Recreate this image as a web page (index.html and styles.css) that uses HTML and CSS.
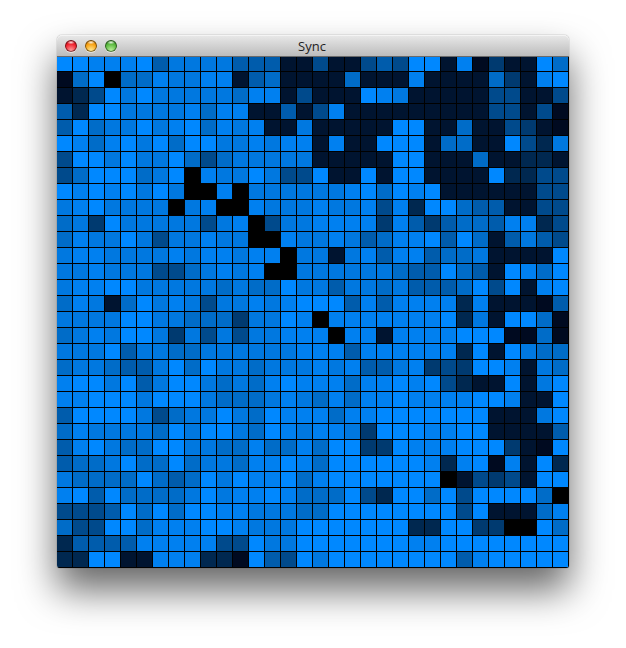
FILE: index.html
```html
<!DOCTYPE html>
<html lang="en">
<head>
    <meta charset="UTF-8">
    <meta name="viewport" content="width=device-width, initial-scale=1.0">
    <title>Sync</title>
    <link rel="stylesheet" href="styles.css">
</head>
<body>
    <div class="window">
        <div class="titlebar">
            <div class="lights">
                <span class="light red"></span>
                <span class="light yellow"></span>
                <span class="light green"></span>
            </div>
            <span class="title">Sync</span>
        </div>
        <div class="grid" id="grid"></div>
    </div>
    <script src="script.js"></script>
</body>
</html>
```

FILE: styles.css
```css
/* General styles */
body {
    margin: 0;
    padding: 35px 57px 80px;
    background: white;
    font-family: 'Open Sans', 'DejaVu Sans', sans-serif;
}

.window {
    width: 512px;
    border-radius: 5px 5px 3px 3px;
    box-shadow: 0 22px 38px rgba(0, 0, 0, 0.6), 0 0 1px rgba(0, 0, 0, 0.7);
}

/* Title bar */
.titlebar {
    position: relative;
    z-index: 1;
    display: flex;
    align-items: center;
    justify-content: center;
    height: 21px;
    padding-right: 2px;
    box-sizing: border-box;
    border-radius: 5px 5px 0 0;
    background: linear-gradient(#e9e9e9, #bcbcbc);
    box-shadow: inset 0 1px 0 #f4f4f4, 0 1px 0 #6a6a6a;
}

.lights {
    position: absolute;
    left: 8px;
    top: 5px;
    display: flex;
    gap: 8px;
}

.light {
    width: 12px;
    height: 12px;
    border-radius: 50%;
    box-shadow: inset 0 0 0 1px rgba(0, 0, 0, 0.5), 0 1px 0 rgba(255, 255, 255, 0.5);
}

.red {
    background: radial-gradient(ellipse 4px 2px at 50% 20%, rgba(255, 255, 255, 0.85), transparent),
        radial-gradient(circle at 50% 85%, #ff9a9a, #f0202c 55%, #a00c16);
}

.yellow {
    background: radial-gradient(ellipse 4px 2px at 50% 20%, rgba(255, 255, 255, 0.85), transparent),
        radial-gradient(circle at 50% 85%, #ffe890, #f8a010 55%, #a06008);
}

.green {
    background: radial-gradient(ellipse 4px 2px at 50% 20%, rgba(255, 255, 255, 0.85), transparent),
        radial-gradient(circle at 50% 85%, #b8f098, #58b83c 55%, #2c7020);
}

.title {
    font-size: 13px;
    color: #222;
}

/* Board */
.grid {
    display: grid;
    grid-template-columns: repeat(32, 16px);
    grid-auto-rows: 16px;
    overflow: hidden;
    border-radius: 0 0 3px 3px;
}

.cell {
    box-sizing: border-box;
    border-right: 1px solid black;
    border-bottom: 1px solid black;
}

.l0 { background: #0088ff; }
.l1 { background: #0080f0; }
.l2 { background: #0078e0; }
.l3 { background: #006cc8; }
.l4 { background: #005cac; }
.l5 { background: #004a8c; }
.l6 { background: #003a70; }
.l7 { background: #002850; }
.l8 { background: #001430; }
.l9 { background: #000a20; }
.la { background: #000000; }
```

FILE: script.js
```js
// one string per row, one shade per cell (0 = brightest, a = black)
const rows = [
    "00111042222444885885450081968803",
    "930a3312211843888838881888836810",
    "87502022222311858880128888855885",
    "47002222131188485188888888855859",
    "40322021031218828888800883885689",
    "01310203002212118188000833880572",
    "50020220353222228888800888388778",
    "53000320a12202550880800888807755",
    "01010202aa1a22222210301088888855",
    "2102222a21aa12221221517003448855",
    "326022222521a5221111614643341175",
    "312202522122aa122124311040384245",
    "21122221211211a22821411433288880",
    "2212225532121aa22222234403480130",
    "21100222223233022422324443050810",
    "31283021252212100041411117188894",
    "2222002233362201a111111107280039",
    "32120026252522111a11811110009939",
    "22204223322222211141111117080233",
    "32234420302232221214421656001823",
    "10020420023231011131101057880820",
    "11000200023332123131101111001880",
    "40000253220230111311000000088820",
    "31222230200230121126000110088884",
    "41023300223313313006601110006890",
    "43320330322311013000000171091807",
    "233330343020110310000000a8565800",
    "1040333320211013330570030500003a",
    "55540303001122233000000005088831",
    "3550031110012220000000770066aa03",
    "74444111115502200000001100000000",
    "77008811177904502000000004100000",
];

const grid = document.getElementById("grid");

rows.forEach((row) => {
    for (const shade of row) {
        const cell = document.createElement("div");
        cell.className = "cell l" + shade;
        grid.appendChild(cell);
    }
});
```
